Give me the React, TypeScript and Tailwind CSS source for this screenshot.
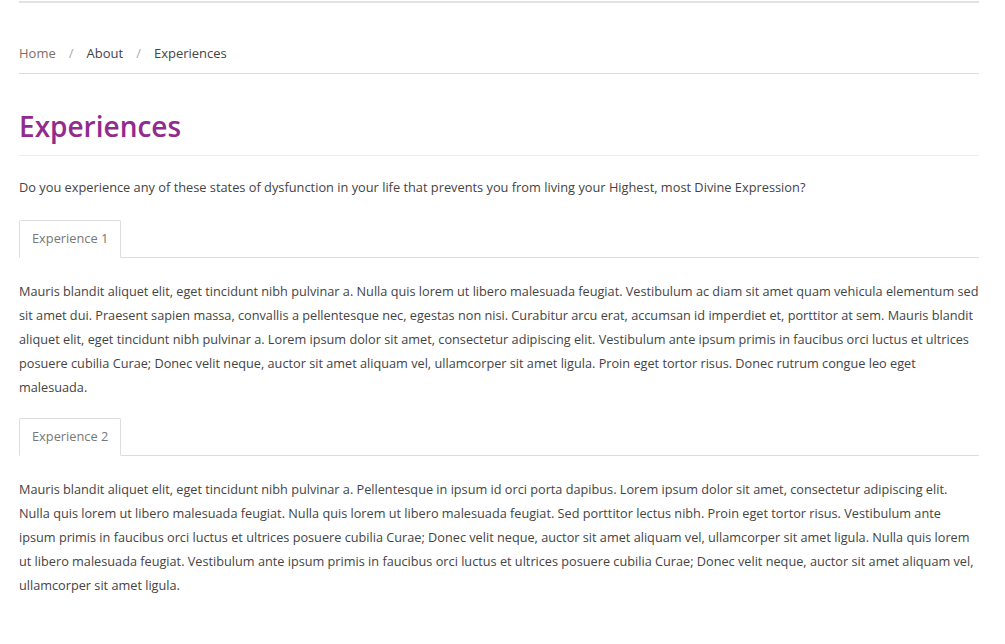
import React from "react";

const p1 =
  "Mauris blandit aliquet elit, eget tincidunt nibh pulvinar a. Nulla quis lorem ut libero malesuada feugiat. Vestibulum ac diam sit amet quam vehicula elementum sed sit amet dui. Praesent sapien massa, convallis a pellentesque nec, egestas non nisi. Curabitur arcu erat, accumsan id imperdiet et, porttitor at sem. Mauris blandit aliquet elit, eget tincidunt nibh pulvinar a. Lorem ipsum dolor sit amet, consectetur adipiscing elit. Vestibulum ante ipsum primis in faucibus orci luctus et ultrices posuere cubilia Curae; Donec velit neque, auctor sit amet aliquam vel, ullamcorper sit amet ligula. Proin eget tortor risus. Donec rutrum congue leo eget malesuada.";

const p2 =
  "Mauris blandit aliquet elit, eget tincidunt nibh pulvinar a. Pellentesque in ipsum id orci porta dapibus. Lorem ipsum dolor sit amet, consectetur adipiscing elit. Nulla quis lorem ut libero malesuada feugiat. Nulla quis lorem ut libero malesuada feugiat. Sed porttitor lectus nibh. Proin eget tortor risus. Vestibulum ante ipsum primis in faucibus orci luctus et ultrices posuere cubilia Curae; Donec velit neque, auctor sit amet aliquam vel, ullamcorper sit amet ligula. Nulla quis lorem ut libero malesuada feugiat. Vestibulum ante ipsum primis in faucibus orci luctus et ultrices posuere cubilia Curae; Donec velit neque, auctor sit amet aliquam vel, ullamcorper sit amet ligula.";

function Tab({ label }: { label: string }) {
  return (
    <div className="flex border-b border-[#dddddd]">
      <div className="-mb-px h-[38px] flex items-center px-[12px] border border-[#dddddd] border-b-white bg-white text-[#777777] rounded-t-[2px]">
        {label}
      </div>
    </div>
  );
}

export default function App() {
  return (
    <div className="bg-white min-h-[644px] w-[1005px] text-[12.8px] text-[#444444] font-['Open_Sans',sans-serif]">
      <div className="ml-[19px] w-[960px]">
        <div className="h-[2px] bg-[#e2e2e2] mt-px" />
        <div className="flex items-center h-[71px] pt-[42px] pb-[10px] border-b border-[#dddddd] text-[13px]">
          <span className="text-[#7d7066]">Home</span>
          <span className="text-[#aaaaaa] px-[13px]">/</span>
          <span className="text-[#444444]">About</span>
          <span className="text-[#aaaaaa] px-[13px]">/</span>
          <span className="text-[#444444]">Experiences</span>
        </div>
        <h1 className="text-[28px] font-semibold text-[#922b8e] leading-[40px] mt-[32px] pb-[9px] border-b border-[#eeeeee]">
          Experiences
        </h1>
        <p className="leading-[24px] mt-[19px]">
          Do you experience any of these states of dysfunction in your life that prevents you from living your Highest, most Divine Expression?
        </p>
        <div className="mt-[21px]">
          <Tab label="Experience 1" />
          <p className="leading-[24px] mt-[21px] text-[12.71px]">{p1}</p>
        </div>
        <div className="mt-[19px]">
          <Tab label="Experience 2" />
          <p className="leading-[24px] mt-[21px] text-[12.71px]">{p2}</p>
        </div>
      </div>
    </div>
  );
}
